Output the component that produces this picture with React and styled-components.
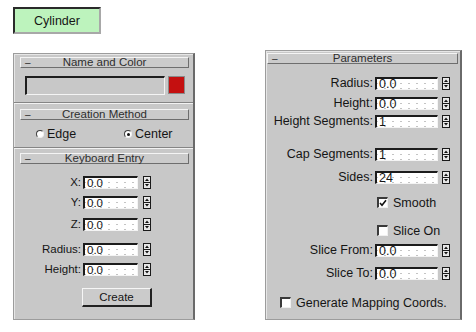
import React from "react";
import styled, { createGlobalStyle } from "styled-components";

const GlobalStyle = createGlobalStyle`
  html, body { margin: 0; padding: 0; background: #fff; }
  body { font-family: "Liberation Sans", Arial, sans-serif; color: #151515; }
  * { box-sizing: border-box; }
`;

const Page = styled.div`
  width: 476px;
  height: 332px;
  overflow: hidden;
  display: flex;
  align-items: flex-start;
  padding-left: 13px;
`;

const LeftCol = styled.div`
  width: 182px;
  display: flex;
  flex-direction: column;
  padding-top: 7px;
`;

const RightCol = styled.div`
  margin-left: 70px;
  padding-top: 50px;
  width: 197px;
`;

const CylinderButton = styled.div`
  width: 88px;
  height: 27px;
  background: #bdf3bd;
  border-top: 2px solid #2a2a2a;
  border-left: 2px solid #2a2a2a;
  border-right: 2px solid #a8a8a8;
  border-bottom: 2px solid #a8a8a8;
  font-size: 12.5px;
  display: flex;
  align-items: center;
  justify-content: center;
`;

const Panel = styled.div`
  margin-top: ${(p) => p.$top || 0}px;
  width: ${(p) => p.$width}px;
  background: #c8c8c8;
  border: 1px solid #9c9c9c;
  border-right: 2px solid #6a6a6a;
  box-shadow: inset 1px 1px 0 #e6e6e6;
`;

const Section = styled.div`
  padding: ${(p) => p.$pad};
  border-bottom: ${(p) => (p.$last ? "none" : "1px solid #858585")};
  box-shadow: ${(p) => (p.$last ? "none" : "0 1px 0 #f2f2f2")};
  margin-bottom: ${(p) => (p.$last ? 0 : 1)}px;
  display: flex;
  flex-direction: column;
`;

const Header = styled.div`
  height: 11px;
  display: grid;
  grid-template-columns: 20px 1fr 20px;
  align-items: center;
  background: #cbcbcb;
  border-top: 1px solid #f4f4f4;
  border-left: 1px solid #f4f4f4;
  border-bottom: 1px solid #6e6e6e;
  border-right: 1px solid #6e6e6e;
  font-size: 11.5px;
  line-height: 9px;
  color: #2e2e2e;
  white-space: nowrap;
`;

const Dash = styled.span`
  padding-left: 4px;
  font-size: 10px;
`;

const HeaderTitle = styled.span`
  text-align: center;
`;

const NameRow = styled.div`
  margin-top: 8px;
  display: flex;
  gap: 3px;
  padding-left: 5px;
`;

const NameField = styled.div`
  width: 140px;
  height: 19px;
  background: #c8c8c8;
  border-top: 2px solid #1e1e1e;
  border-left: 2px solid #1e1e1e;
  border-right: 1px solid #f4f4f4;
  border-bottom: 1px solid #f4f4f4;
`;

const Swatch = styled.div`
  width: 17px;
  height: 18px;
  background: #c41010;
  border: 1px solid #8a8a8a;
`;

const RadioRow = styled.div`
  margin-top: 7px;
  height: 14px;
  display: grid;
  grid-template-columns: 88px 1fr;
  padding-left: 16px;
  font-size: 12.5px;
`;

const RadioLabel = styled.label`
  display: flex;
  align-items: center;
  gap: 3px;
  white-space: nowrap;
`;

const RadioDot = styled.span`
  width: 8px;
  height: 8px;
  border-radius: 50%;
  background: #fff;
  border-top: 1px solid #404040;
  border-left: 1px solid #404040;
  border-right: 1px solid #f0f0f0;
  border-bottom: 1px solid #f0f0f0;
  display: flex;
  align-items: center;
  justify-content: center;
  &::after {
    content: "";
    width: 3px;
    height: 3px;
    border-radius: 50%;
    background: ${(p) => (p.$on ? "#111" : "transparent")};
  }
`;

const SpinRow = styled.div`
  margin-top: ${(p) => p.$mt}px;
  height: 13px;
  display: grid;
  grid-template-columns: ${(p) => p.$label}px ${(p) => p.$field}px ${(p) => p.$spin}px;
  column-gap: 2px;
  align-items: center;
  font-size: ${(p) => p.$fs}px;
`;

const Label = styled.span`
  text-align: right;
  white-space: nowrap;
  line-height: 13px;
`;

const Field = styled.div`
  height: 13px;
  background-color: #fff;
  background-image: radial-gradient(circle, #c4c4c4 0.6px, transparent 0.8px);
  background-size: 8px 5px;
  background-position: 20px 2px;
  border-top: 2px solid #1c1c1c;
  border-left: 2px solid #1c1c1c;
  border-right: 1px solid #f4f4f4;
  border-bottom: 1px solid #f4f4f4;
  padding-left: 2px;
  line-height: 10px;
  white-space: nowrap;
`;

const SpinBox = styled.span`
  display: flex;
  justify-content: flex-end;
`;

const Spinner = () => (
  <svg width="8" height="13" viewBox="0 0 8 13">
    <rect x="0.5" y="0.5" width="7" height="12" fill="#e8e8e8" stroke="#1a1a1a" />
    <line x1="0" y1="6.5" x2="8" y2="6.5" stroke="#1a1a1a" />
    <polygon points="2,5 4,2.5 6,5" fill="#111" />
    <polygon points="2,8 6,8 4,10.5" fill="#111" />
  </svg>
);

const CreateButton = styled.div`
  margin-top: 12px;
  margin-left: 62px;
  width: 70px;
  height: 19px;
  background: #cbcbcb;
  border-top: 1px solid #f6f6f6;
  border-left: 1px solid #f6f6f6;
  border-right: 2px solid #222;
  border-bottom: 2px solid #222;
  font-size: 11.5px;
  display: flex;
  align-items: center;
  justify-content: center;
`;

const CheckRow = styled.div`
  margin-top: ${(p) => p.$mt}px;
  margin-left: ${(p) => p.$ml}px;
  height: 13px;
  display: flex;
  align-items: center;
  gap: ${(p) => p.$gap}px;
  font-size: 12.5px;
  white-space: nowrap;
`;

const Box = styled.span`
  width: 11px;
  height: 11px;
  background: #fff;
  border-top: 2px solid #3a3a3a;
  border-left: 2px solid #3a3a3a;
  border-right: 1px solid #f0f0f0;
  border-bottom: 1px solid #f0f0f0;
  display: flex;
  align-items: center;
  justify-content: center;
`;

const Check = () => (
  <svg width="8" height="8" viewBox="0 0 8 8">
    <path d="M1 4 L3 6.2 L7 1.2" fill="none" stroke="#111" strokeWidth="1.6" />
  </svg>
);

const leftRows = [
  { l: "X:", v: "0.0", mt: 12 },
  { l: "Y:", v: "0.0", mt: 7 },
  { l: "Z:", v: "0.0", mt: 9 },
  { l: "Radius:", v: "0.0", mt: 12 },
  { l: "Height:", v: "0.0", mt: 7 },
];

const rightTop = [
  { l: "Radius:", v: "0.0", mt: 13 },
  { l: "Height:", v: "0.0", mt: 7 },
  { l: "Height Segments:", v: "1", mt: 5 },
  { l: "Cap Segments:", v: "1", mt: 20 },
  { l: "Sides:", v: "24", mt: 10 },
];

const rightBottom = [
  { l: "Slice From:", v: "0.0", mt: 7 },
  { l: "Slice To:", v: "0.0", mt: 10 },
];

const RightSpin = ({ l, v, mt }) => (
  <SpinRow $mt={mt} $label={106} $field={63} $spin={10} $fs={12.5}>
    <Label>{l}</Label>
    <Field>{v}</Field>
    <SpinBox>
      <Spinner />
    </SpinBox>
  </SpinRow>
);

export default function App() {
  return (
    <>
      <GlobalStyle />
      <Page>
        <LeftCol>
          <CylinderButton>Cylinder</CylinderButton>
          <Panel $top={19} $width={182}>
            <Section $pad="3px 4px 7px 6px">
              <Header>
                <Dash>–</Dash>
                <HeaderTitle>Name and Color</HeaderTitle>
              </Header>
              <NameRow>
                <NameField />
                <Swatch />
              </NameRow>
            </Section>
            <Section $pad="5px 4px 6px 6px">
              <Header>
                <Dash>–</Dash>
                <HeaderTitle>Creation Method</HeaderTitle>
              </Header>
              <RadioRow>
                <RadioLabel>
                  <RadioDot />
                  Edge
                </RadioLabel>
                <RadioLabel>
                  <RadioDot $on />
                  Center
                </RadioLabel>
              </RadioRow>
            </Section>
            <Section $last $pad="4px 4px 12px 6px">
              <Header>
                <Dash>–</Dash>
                <HeaderTitle>Keyboard Entry</HeaderTitle>
              </Header>
              {leftRows.map((r) => (
                <SpinRow key={r.l} $mt={r.mt} $label={61} $field={55} $spin={11} $fs={11.5}>
                  <Label>{r.l}</Label>
                  <Field>{r.v}</Field>
                  <SpinBox>
                    <Spinner />
                  </SpinBox>
                </SpinRow>
              ))}
              <CreateButton>Create</CreateButton>
            </Section>
          </Panel>
        </LeftCol>
        <RightCol>
          <Panel $width={197}>
            <Section $last $pad="2px 2px 10px 1px">
              <Header>
                <Dash>–</Dash>
                <HeaderTitle>Parameters</HeaderTitle>
              </Header>
              {rightTop.map((r) => (
                <RightSpin key={r.l} {...r} />
              ))}
              <CheckRow $mt={12} $ml={110} $gap={5}>
                <Box>
                  <Check />
                </Box>
                Smooth
              </CheckRow>
              <CheckRow $mt={15} $ml={110} $gap={5}>
                <Box />
                Slice On
              </CheckRow>
              {rightBottom.map((r) => (
                <RightSpin key={r.l} {...r} />
              ))}
              <CheckRow $mt={16} $ml={13} $gap={5}>
                <Box />
                Generate Mapping Coords.
              </CheckRow>
            </Section>
          </Panel>
        </RightCol>
      </Page>
    </>
  );
}
